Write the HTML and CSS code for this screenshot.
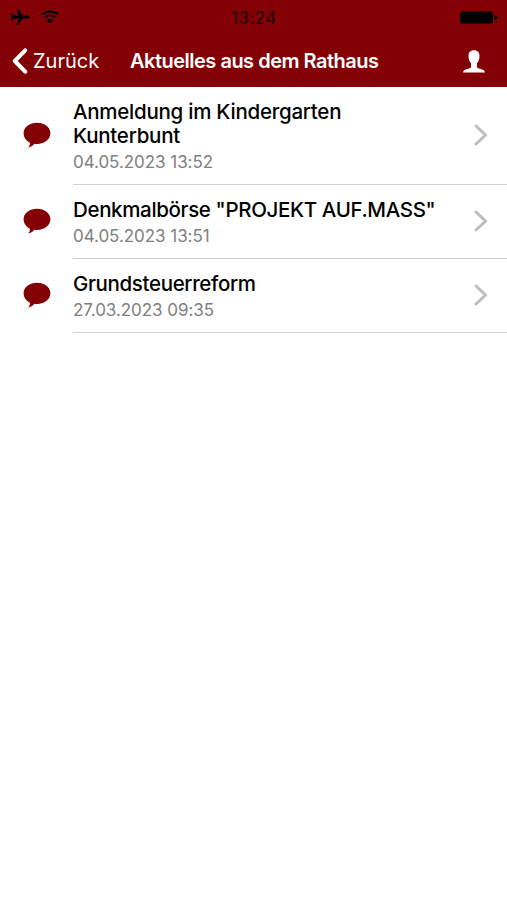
FILE: index.html
```html
<!DOCTYPE html>
<html lang="de">

<head>
    <meta charset="UTF-8">
    <meta name="viewport" content="width=device-width, initial-scale=1.0">
    <title>Aktuelles aus dem Rathaus</title>
    <link rel="stylesheet" href="styles.css">
</head>

<body>
    <svg class="sprite" aria-hidden="true">
        <symbol id="bubble" viewBox="0 0 28 27">
            <path d="M14 .8C21.500.8 27.400 5.300 27.400 11.300S21.500 22 14 22c-.9 0-1.800-.1-2.600-.2C9.600 23.900 7.800 25.200 5 25.600c1.300-1 2-2.600 2-4.800C3.100 19 .6 15.400.6 11.300.6 5.300 6.500.8 14 .8z"/>
        </symbol>
        <symbol id="arrow" viewBox="0 0 14 22">
            <path d="M2 2l9.600 9L2 20"/>
        </symbol>
    </svg>

    <header class="header">
        <div class="status">
            <div class="status-left">
                <svg class="plane" viewBox="0 0 20 16">
                    <path d="M19.500 8c0-.9-1-1.400-2.300-1.400h-4.400L8.300.3H6.700l2.200 6.300H4L2.300 4.500H.9L1.800 8 .9 11.500h1.400L4 9.400h4.900l-2.200 6.300h1.600l4.500-6.300h4.400c1.300 0 2.300-.5 2.300-1.400z"/>
                </svg>
                <svg class="wifi" viewBox="0 0 18 14">
                    <path d="M1 4.600c4.600-4.300 11.400-4.300 16 0M3.900 7.600c3-2.700 7.200-2.700 10.200 0"/>
                    <path class="wifi-dot" d="M5.900 10c1.800-1.500 4.400-1.500 6.200 0L9 13.600z"/>
                </svg>
            </div>
            <span class="time">13:24</span>
            <svg class="battery" viewBox="0 0 38 13">
                <rect x="0" y=".5" width="33" height="12" rx="2.500"/>
                <path d="M34.500 4c1.800.6 3 1.300 3 2.500s-1.200 1.900-3 2.500z"/>
            </svg>
        </div>
        <nav class="nav">
            <a class="back" href="#">
                <svg class="back-icon" viewBox="0 0 16 26"><path d="M13.200 2.300L2.800 13l10.400 10.700"/></svg>
                <span>Zurück</span>
            </a>
            <h1 class="title">Aktuelles aus dem Rathaus</h1>
            <svg class="user" viewBox="0 0 22 23">
                <path d="M11 .3c3.500 0 5.500 2.200 5.500 5.700 0 2.900-.8 5.500-2.500 7.200v3.200c0 1.200.7 1.800 2 2.200 3.300 1 5.500 1.300 5.900 3.900H.1c.4-2.600 2.600-2.900 5.900-3.900 1.300-.4 2-1 2-2.200v-3.200C6.300 11.500 5.500 8.900 5.500 6 5.500 2.500 7.500.3 11 .3z"/>
            </svg>
        </nav>
    </header>

    <ul class="news">
        <li class="item item-tall">
            <svg class="bubble"><use href="#bubble"/></svg>
            <div class="content">
                <div class="text">
                    <h2 class="headline">Anmeldung im Kindergarten Kunterbunt</h2>
                    <time class="date">04.05.2023 13:52</time>
                </div>
                <svg class="arrow"><use href="#arrow"/></svg>
            </div>
        </li>
        <li class="item">
            <svg class="bubble"><use href="#bubble"/></svg>
            <div class="content">
                <div class="text">
                    <h2 class="headline">Denkmalbörse "PROJEKT AUF.MASS"</h2>
                    <time class="date">04.05.2023 13:51</time>
                </div>
                <svg class="arrow"><use href="#arrow"/></svg>
            </div>
        </li>
        <li class="item">
            <svg class="bubble"><use href="#bubble"/></svg>
            <div class="content">
                <div class="text">
                    <h2 class="headline">Grundsteuerreform</h2>
                    <time class="date">27.03.2023 09:35</time>
                </div>
                <svg class="arrow"><use href="#arrow"/></svg>
            </div>
        </li>
    </ul>
</body>

</html>
```
FILE: styles.css
```css
* {
    box-sizing: border-box;
}

body {
    margin: 0;
    min-height: 100vh;
    background-color: #fff;
    color: #000;
    font-family: Inter, "Liberation Sans", sans-serif;
}

h1,
h2,
ul {
    margin: 0;
    padding: 0;
}

.sprite {
    display: none;
}

.header {
    height: 87px;
    background-color: #830004;
    color: #fff;
}

/* Statusleiste */
.status {
    display: grid;
    grid-template-columns: 1fr auto 1fr;
    align-items: center;
    height: 35px;
    padding: 0 9px 0 10px;
}

.status-left {
    display: flex;
    align-items: center;
    gap: 11px;
    padding-bottom: 1px;
}

.plane {
    width: 20px;
    height: 16px;
}

.wifi {
    width: 18px;
    height: 14px;
    fill: none;
    stroke: #000;
    stroke-width: 2;
}

.wifi-dot {
    fill: #000;
    stroke: none;
}

.time {
    color: #220001;
    font-size: 17px;
    letter-spacing: 0.4px;
}

.battery {
    justify-self: end;
    width: 38px;
    height: 13px;
}

/* Navigation */
.nav {
    display: flex;
    align-items: center;
    height: 52px;
    padding: 0 22px 0 12px;
}

.back {
    display: flex;
    align-items: center;
    gap: 5px;
    width: 118px;
    color: #fff;
    font-size: 20px;
    text-decoration: none;
}

.back-icon {
    width: 16px;
    height: 26px;
    fill: none;
    stroke: #fff;
    stroke-width: 4;
    stroke-linecap: round;
    stroke-linejoin: round;
}

.title {
    font-size: 20px;
    font-weight: 600;
    letter-spacing: -0.5px;
    white-space: nowrap;
}

.user {
    width: 22px;
    height: 23px;
    margin-left: auto;
    fill: #fff;
}

/* Liste */
.news {
    list-style: none;
}

.item {
    display: flex;
    align-items: center;
    height: 74px;
    padding-left: 23px;
}

.item-tall {
    height: 98px;
}

.bubble {
    width: 28px;
    height: 27px;
    margin: 0 22px 1px 0;
    fill: #830004;
}

.content {
    display: flex;
    flex: 1;
    align-items: center;
    justify-content: space-between;
    height: 100%;
    padding-right: 19px;
    border-bottom: 1px solid #cfcfcf;
}

.text {
    width: 375px;
    padding-top: 2px;
}

.headline {
    font-size: 20.5px;
    font-weight: 500;
    letter-spacing: -0.35px;
    line-height: 24px;
}

.item-tall .headline {
    width: 300px;
    letter-spacing: -0.25px;
}

.date {
    display: block;
    margin-top: 2px;
    color: #808080;
    font-size: 17px;
    letter-spacing: -0.05px;
    line-height: 24px;
}

.arrow {
    width: 14px;
    height: 22px;
    margin-bottom: 2px;
    fill: none;
    stroke: #bdbdbd;
    stroke-width: 3;
    stroke-linecap: round;
    stroke-linejoin: round;
}
```
